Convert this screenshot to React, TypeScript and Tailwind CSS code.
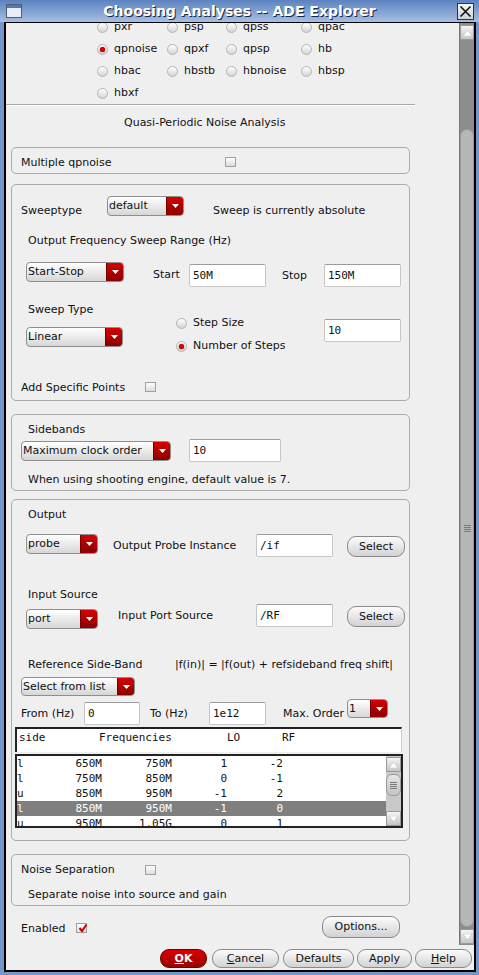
import React from "react";

type Kids = { children?: React.ReactNode };

function Radio({ on = false }: { on?: boolean }) {
  return (
    <span className="flex h-[11px] w-[11px] shrink-0 items-center justify-center rounded-full border border-[#b4b4b4] bg-linear-to-b from-white to-[#d4d4d4]">
      {on && <span className="h-[5px] w-[5px] rounded-full bg-[#d80000] shadow-[0_0_1px_#500]" />}
    </span>
  );
}

function Check({ on = false }: { on?: boolean }) {
  return (
    <span className="relative block h-[10px] w-[11px] shrink-0 border border-[#a0a0a0] bg-linear-to-b from-white to-[#dcdcdc]">
      {on && (
        <svg className="absolute left-[1px] top-[-1px]" width="10" height="10" viewBox="0 0 10 10">
          <path d="M1.5 5 L4 8 L8.5 1.5" stroke="#d00000" strokeWidth="2" fill="none" />
        </svg>
      )}
    </span>
  );
}

function Combo({ label, w, h = "h-[20px]", mt = "" }: { label: string; w: string; h?: string; mt?: string }) {
  return (
    <div className={`flex ${w} ${h} ${mt} shrink-0 overflow-hidden rounded-[4px] border border-[#8e8e8e] bg-linear-to-b from-white to-[#d6d6d6]`}>
      <span className="flex flex-1 items-center truncate pl-[1px]">{label}</span>
      <span className="flex w-[17px] items-center justify-center border-l border-[#760000] bg-linear-to-b from-[#d80000] to-[#8a0000]">
        <svg width="7" height="4" viewBox="0 0 7 4">
          <polygon points="0,0 7,0 3.5,4" fill="white" />
        </svg>
      </span>
    </div>
  );
}

function Field({ value, w, mt = "" }: { value: string; w: string; mt?: string }) {
  return (
    <div className={`${w} ${mt} h-[23px] shrink-0 rounded-[2px] border border-[#c6c6c6] border-t-[#9c9c9c] bg-white pl-[3px] font-['DejaVu_Sans_Mono',monospace] leading-[21px]`}>
      {value}
    </div>
  );
}

function Btn({ children, cls }: Kids & { cls: string }) {
  return (
    <div className={`flex shrink-0 items-center justify-center rounded-[9px] border border-[#8a8a8a] bg-linear-to-b from-[#fcfcfc] to-[#d2d2d2] ${cls}`}>
      {children}
    </div>
  );
}

function Group({ children, cls }: Kids & { cls: string }) {
  return <div className={`ml-[5px] w-[399px] rounded-[5px] border border-[#ababab] ${cls}`}>{children}</div>;
}

const analyses: [string, boolean][] = [
  ["pxr", false], ["psp", false], ["qpss", false], ["qpac", false],
  ["qpnoise", true], ["qpxf", false], ["qpsp", false], ["hb", false],
  ["hbac", false], ["hbstb", false], ["hbnoise", false], ["hbsp", false],
  ["hbxf", false],
];

const rows = [
  ["l", "650M", "750M", "1", "-2"],
  ["l", "750M", "850M", "0", "-1"],
  ["u", "850M", "950M", "-1", "2"],
  ["l", "850M", "950M", "-1", "0"],
  ["u", "950M", "1.05G", "0", "1"],
];

function ArrowBtn({ up, cls }: { up: boolean; cls: string }) {
  return (
    <div className={`flex items-center justify-center border border-[#9a9a9a] bg-linear-to-b from-[#f4f4f4] to-[#c6c6c6] ${cls}`}>
      <svg width="9" height="6" viewBox="0 0 9 6">
        <polygon points={up ? "0,6 9,6 4.5,0" : "0,0 9,0 4.5,6"} fill="white" stroke="#b0b0b0" strokeWidth="0.5" />
      </svg>
    </div>
  );
}

function Grip() {
  return (
    <div className="flex flex-col gap-[1px]">
      <span className="h-[1px] w-[7px] bg-[#7a7a7a]" />
      <span className="h-[1px] w-[7px] bg-[#7a7a7a]" />
      <span className="h-[1px] w-[7px] bg-[#7a7a7a]" />
      <span className="h-[1px] w-[7px] bg-[#7a7a7a]" />
    </div>
  );
}

export default function App() {
  return (
    <div className="flex h-[975px] w-[479px] flex-col bg-[#7496cb] font-['DejaVu_Sans',sans-serif] text-[11px] leading-[14px] text-[#111]">
      {/* title bar */}
      <div className="flex h-[22px] shrink-0 items-center bg-linear-to-b from-[#5b82bf] to-[#a6bfe3]">
        <div className="ml-[6px] h-[14px] w-[16px] border border-[#4d5d78] bg-[#e9eef6]">
          <div className="h-[3px] bg-[#5479b4]" />
        </div>
        <div className="flex-1 text-center text-[14px] font-bold text-white [text-shadow:1px_1px_0_#1c2740]">
          Choosing Analyses -- ADE Explorer
        </div>
        <div className="mr-[5px] flex h-[17px] w-[17px] items-center justify-center border border-[#333] bg-linear-to-b from-[#f6f6f6] to-[#cfcfcf]">
          <svg width="13" height="13" viewBox="0 0 13 13">
            <path d="M1.5 1.5 L11.5 11.5 M11.5 1.5 L1.5 11.5" stroke="#111" strokeWidth="1.6" />
          </svg>
        </div>
      </div>

      {/* window body */}
      <div className="mb-[3px] ml-[4px] mr-[3px] flex flex-1 flex-col border-2 border-t border-black bg-[#efefef]">
        <div className="flex h-[922px]">
          <div className="h-[922px] w-[453px] overflow-hidden">
            <div className="-mt-[7px]">
              {/* analysis radios */}
              <div className="ml-[91px] grid grid-cols-[70px_59px_75px_60px]">
                {analyses.map(([n, on]) => (
                  <div key={n} className="flex h-[22px] items-center gap-[6px]">
                    <Radio on={on} />
                    <span>{n}</span>
                  </div>
                ))}
              </div>
              <div className="h-[2px] w-[409px] border-t border-b border-t-[#a8a8a8] border-b-white" />

              <div className="mt-[10px] pl-[118px]">Quasi-Periodic Noise Analysis</div>

              <Group cls="mt-[17px] h-[27px] pt-[8px]">
                <div className="flex items-start">
                  <span className="w-[213px] pl-[9px]">Multiple qpnoise</span>
                  <span className="mt-[1px]"><Check /></span>
                </div>
              </Group>

              <Group cls="mt-[10px] pt-[11px] pb-[5px]">
                <div className="flex items-start">
                  <span className="mt-[8px] w-[95px] pl-[9px]">Sweeptype</span>
                  <Combo label="default" w="w-[77px]" />
                  <span className="ml-[29px] mt-[8px]">Sweep is currently absolute</span>
                </div>
                <div className="mt-[16px] pl-[16px]">Output Frequency Sweep Range (Hz)</div>
                <div className="mt-[14px] flex items-start pl-[14px]">
                  <Combo label="Start-Stop" w="w-[98px]" />
                  <span className="ml-[29px] mt-[6px] w-[36px]">Start</span>
                  <Field value="50M" w="w-[77px]" mt="mt-[2px]" />
                  <span className="ml-[16px] mt-[7px] w-[42px]">Stop</span>
                  <Field value="150M" w="w-[77px]" mt="mt-[2px]" />
                </div>
                <div className="mt-[16px] flex items-start pl-[14px]">
                  <div className="w-[150px]">
                    <div className="pl-[2px]">Sweep Type</div>
                    <Combo label="Linear" w="w-[97px]" mt="mt-[10px]" />
                  </div>
                  <div className="mt-[13px] flex w-[148px] flex-col gap-[9px]">
                    <div className="flex h-[14px] items-center gap-[6px]">
                      <Radio />
                      <span>Step Size</span>
                    </div>
                    <div className="flex h-[14px] items-center gap-[6px]">
                      <Radio on />
                      <span>Number of Steps</span>
                    </div>
                  </div>
                  <Field value="10" w="w-[77px]" mt="mt-[16px]" />
                </div>
                <div className="mt-[28px] flex items-start">
                  <span className="w-[133px] pl-[9px]">Add Specific Points</span>
                  <span className="mt-[1px]"><Check /></span>
                </div>
              </Group>

              <Group cls="mt-[13px] pt-[8px] pb-[3px]">
                <div className="pl-[16px]">Sidebands</div>
                <div className="mt-[2px] flex items-start pl-[9px]">
                  <Combo label="Maximum clock order" w="w-[150px]" mt="mt-[2px]" />
                  <span className="ml-[18px]">
                    <Field value="10" w="w-[92px]" />
                  </span>
                </div>
                <div className="mt-[11px] pl-[16px]">When using shooting engine, default value is 7.</div>
              </Group>

              <Group cls="mt-[8px] pt-[8px] pb-[12px]">
                <div className="pl-[16px]">Output</div>
                <div className="mt-[12px] flex items-start pl-[14px]">
                  <Combo label="probe" w="w-[72px]" />
                  <span className="ml-[15px] mt-[5px] w-[143px]">Output Probe Instance</span>
                  <Field value="/if" w="w-[77px]" />
                  <Btn cls="ml-[14px] mt-[2px] h-[21px] w-[58px]">Select</Btn>
                </div>
                <div className="mt-[31px] pl-[16px]">Input Source</div>
                <div className="mt-[2px] flex items-start pl-[14px]">
                  <Combo label="port" w="w-[72px]" mt="mt-[5px]" />
                  <span className="ml-[20px] mt-[5px] w-[138px]">Input Port Source</span>
                  <Field value="/RF" w="w-[77px]" />
                  <Btn cls="ml-[14px] mt-[2px] h-[21px] w-[58px]">Select</Btn>
                </div>
                <div className="mt-[29px] flex pl-[16px]">
                  <span className="w-[147px]">Reference Side-Band</span>
                  <span>|f(in)| = |f(out) + refsideband freq shift|</span>
                </div>
                <div className="mt-[5px] pl-[9px]">
                  <Combo label="Select from list" w="w-[114px]" h="h-[19px]" />
                </div>
                <div className="mt-[3px] flex items-start pl-[9px]">
                  <span className="mt-[8px] w-[63px]">From (Hz)</span>
                  <Field value="0" w="w-[56px]" mt="mt-[3px]" />
                  <span className="ml-[10px] mt-[8px] w-[59px]">To (Hz)</span>
                  <Field value="1e12" w="w-[57px]" mt="mt-[3px]" />
                  <span className="ml-[17px] mt-[8px] w-[64px]">Max. Order</span>
                  <Combo label="1" w="w-[41px]" h="h-[19px]" />
                </div>

                {/* table header */}
                <div className="ml-[3px] mt-[2px] flex h-[25px] w-[387px] items-start border-l-2 border-t-2 border-r border-l-[#222] border-t-[#222] border-r-[#cfcfcf] bg-white pl-[2px] pt-[2px] font-['DejaVu_Sans_Mono',monospace]">
                  <span className="w-[80px]">side</span>
                  <span className="w-[128px]">Frequencies</span>
                  <span className="w-[55px]">LO</span>
                  <span>RF</span>
                </div>

                {/* list */}
                <div className="ml-[3px] mt-[2px] flex h-[74px] w-[388px] overflow-hidden border-2 border-[#222] bg-white font-['DejaVu_Sans_Mono',monospace]">
                  <div className="flex-1 overflow-hidden">
                    {rows.map((r, i) => (
                      <div
                        key={i}
                        className={`flex h-[15px] items-center ${i === 3 ? "bg-[#7f7f7f] text-white" : ""}`}
                      >
                        <span className="w-[30px]">{r[0]}</span>
                        <span className="w-[55px] text-right">{r[1]}</span>
                        <span className="w-[70px] text-right">{r[2]}</span>
                        <span className="w-[55px] text-right">{r[3]}</span>
                        <span className="w-[56px] text-right">{r[4]}</span>
                      </div>
                    ))}
                  </div>
                  <div className="flex w-[15px] flex-col bg-[#c8c8c8] pt-[1px]">
                    <ArrowBtn up cls="h-[15px]" />
                    <div className="mt-[2px] flex h-[22px] items-center justify-center rounded-[6px] border border-[#9a9a9a] bg-linear-to-b from-[#e6e6e6] to-[#c4c4c4]">
                      <Grip />
                    </div>
                    <ArrowBtn up={false} cls="mt-[15px] h-[15px]" />
                  </div>
                </div>
              </Group>

              <Group cls="mt-[13px] pt-[8px] pb-[3px]">
                <div className="flex items-start">
                  <span className="w-[133px] pl-[9px]">Noise Separation</span>
                  <span className="mt-[2px]"><Check /></span>
                </div>
                <div className="mt-[11px] pl-[16px]">Separate noise into source and gain</div>
              </Group>

              <div className="mt-[10px] flex items-start pl-[15px]">
                <span className="mt-[6px] w-[55px]">Enabled</span>
                <span className="mt-[7px]"><Check on /></span>
                <span className="w-[235px]" />
                <Btn cls="h-[22px] w-[78px]">Options...</Btn>
              </div>
            </div>
          </div>

          {/* main scrollbar */}
          <div className="flex h-[922px] w-[15px] flex-col border-l border-[#777] bg-[#8d8d8d] pt-[2px]">
            <ArrowBtn up cls="h-[15px]" />
            <div className="mt-[89px] flex h-[798px] items-center justify-center rounded-[7px] border border-[#999] bg-[#b6b6b6]">
              <Grip />
            </div>
            <ArrowBtn up={false} cls="mt-[2px] h-[15px]" />
          </div>
        </div>

        {/* bottom buttons */}
        <div className="flex h-[25px] items-start justify-end pr-[2px] pt-[4px]">
          <div className="flex h-[19px] w-[47px] items-center justify-center rounded-[9px] border border-[#6a0000] bg-linear-to-b from-[#dc0000] to-[#980000] font-bold text-white">
            <span className="underline">O</span>K
          </div>
          <Btn cls="ml-[5px] h-[19px] w-[67px]">
            <span><span className="underline">C</span>ancel</span>
          </Btn>
          <Btn cls="ml-[4px] h-[19px] w-[71px]">Defaults</Btn>
          <Btn cls="ml-[3px] h-[19px] w-[55px]">Apply</Btn>
          <Btn cls="ml-[3px] h-[19px] w-[57px]">
            <span><span className="underline">H</span>elp</span>
          </Btn>
        </div>
      </div>
    </div>
  );
}
